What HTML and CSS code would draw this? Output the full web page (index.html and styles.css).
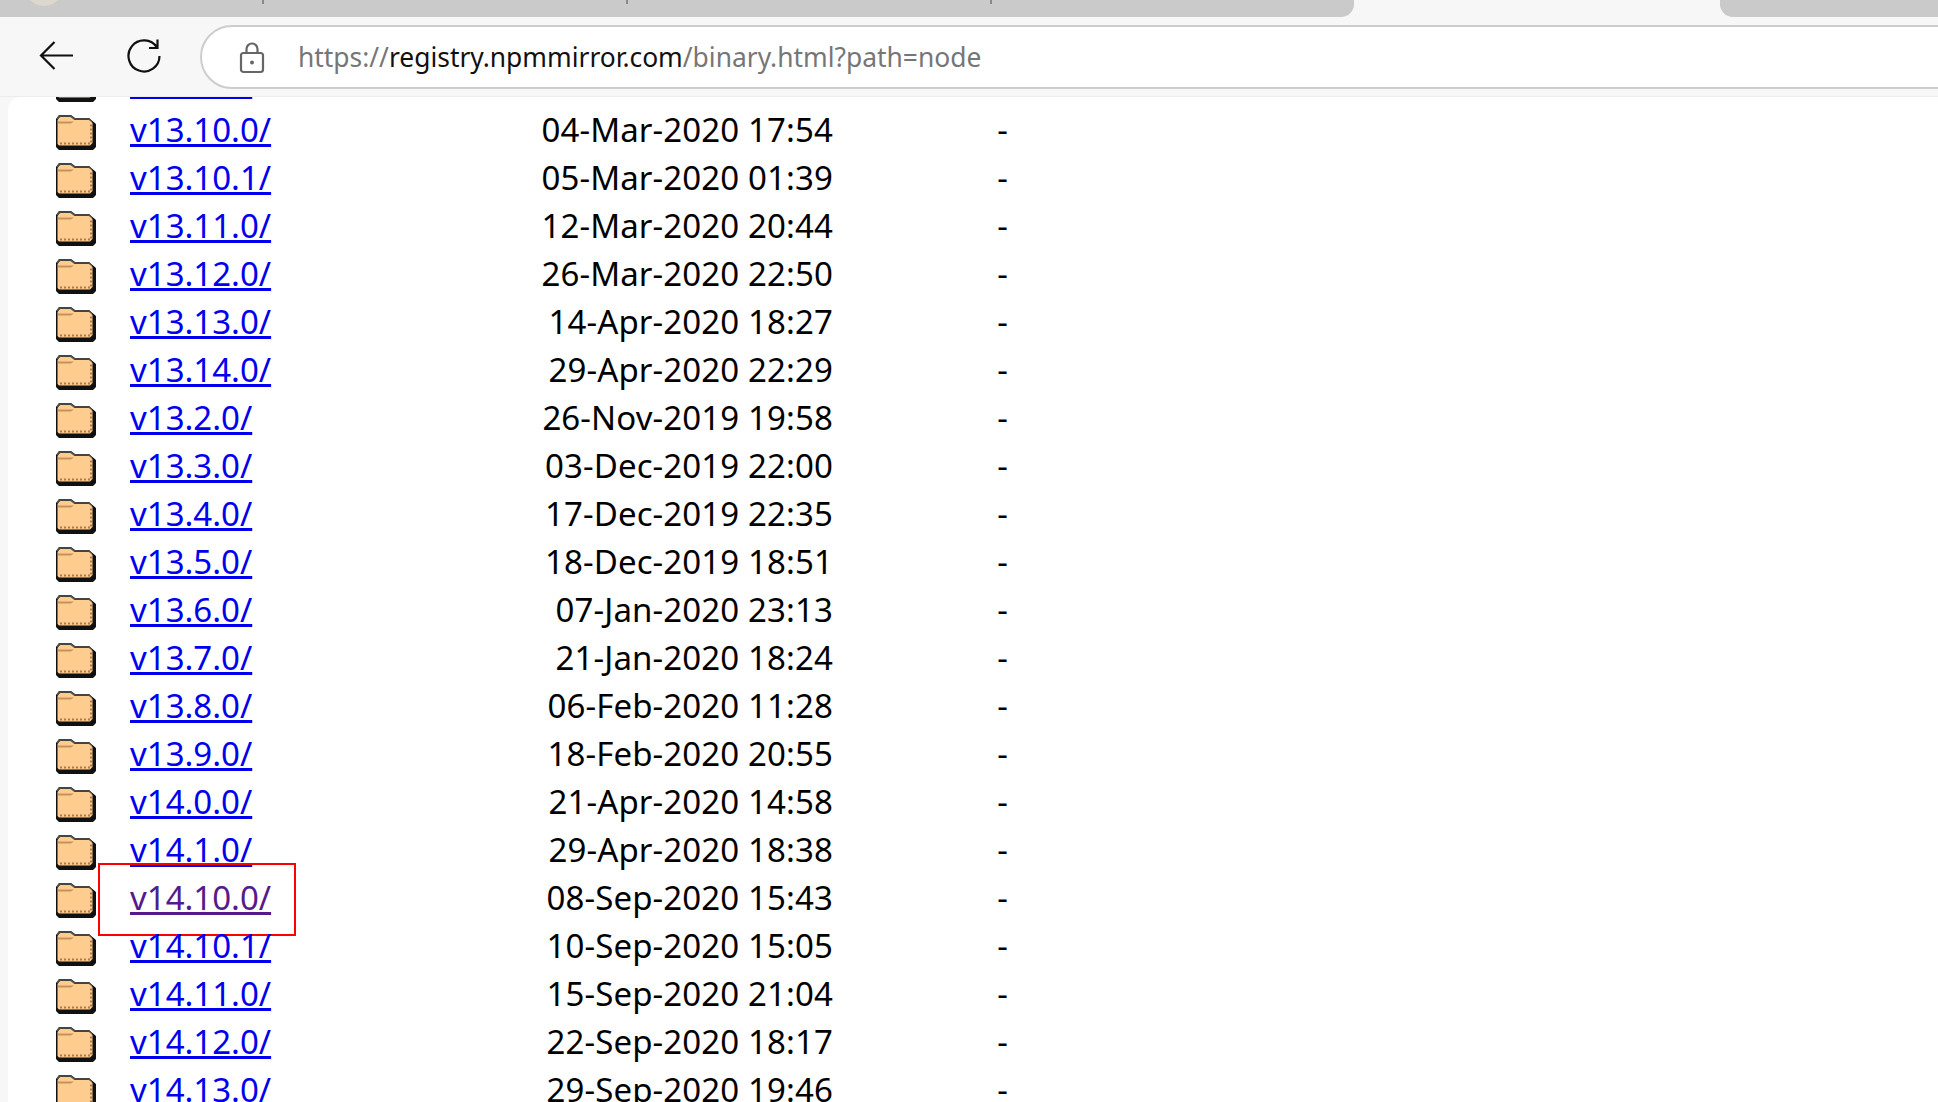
FILE: index.html
```html
<!DOCTYPE html>
<html lang="en">
<head>
  <meta charset="UTF-8">
  <title>Mirror index of node</title>
  <link rel="stylesheet" href="styles.css">
</head>
<body>
  <svg class="defs" width="0" height="0">
    <symbol id="folder" viewBox="0 0 40 36">
      <path d="M3 36 L0 33 V5 L3 1 H15 L19 4 H33 L40 10 V33 L37 36 Z" fill="#111"/>
      <path d="M1 5 L3.5 2 H14.5 L18.5 5 H33 L36 8" fill="none" stroke="#555" stroke-width="1.5"/>
      <path d="M1.5 30 V6 L4 3 H14.5 L18.5 6 H33 L36.5 9 V29 L34 31.5 H3 Z" fill="#ffcc8f"/>
      <path d="M2 9.5 H15 L18 7.5 H2 Z" fill="#c4935f"/>
      <path d="M4 29.5 H35 V10" fill="none" stroke="#a97c4c" stroke-width="2" stroke-dasharray="2 2"/>
    </symbol>
  </svg>

  <div class="tabstrip">
    <div class="tabs">
      <span class="favicon"></span>
      <span class="tabsep sep1"></span>
      <span class="tabsep sep2"></span>
      <span class="tabsep sep3"></span>
    </div>
    <div class="tabgap"></div>
    <div class="tabs-right"></div>
  </div>

  <div class="toolbar">
    <button class="navbtn back">
      <svg width="36" height="32" viewBox="0 0 36 32"><path d="M2 15.5 H34 M15.5 2 L2 15.5 L15.5 29" fill="none" stroke="#111" stroke-width="2.2"/></svg>
    </button>
    <button class="navbtn reload">
      <svg width="36" height="36" viewBox="0 0 36 36"><path d="M31 9.5 A15.5 15.5 0 1 0 33.5 18 M31.5 1.5 V10 H23" fill="none" stroke="#111" stroke-width="2.2"/></svg>
    </button>
    <div class="urlbar">
      <svg class="lock" width="26" height="32" viewBox="0 0 26 32"><rect x="2" y="11" width="22" height="19" rx="2.5" fill="none" stroke="#666" stroke-width="2.2"/><path d="M7.5 11 V7 A5.5 5.5 0 0 1 18.5 7 V11" fill="none" stroke="#666" stroke-width="2.2"/><circle cx="13" cy="20.5" r="2" fill="#666"/></svg>
      <div class="url">https://<b>registry.npmmirror.com</b>/binary.html?path=node</div>
    </div>
  </div>

  <div class="viewport">
    <div class="page">
      <div class="listing">
        <div class="row"><svg class="ficon"><use href="#folder"/></svg><a href="#">v13.1.0/</a><span class="date">19-Nov-2019 16:09</span><span class="size">-</span></div>
        <div class="row"><svg class="ficon"><use href="#folder"/></svg><a href="#">v13.10.0/</a><span class="date">04-Mar-2020 17:54</span><span class="size">-</span></div>
        <div class="row"><svg class="ficon"><use href="#folder"/></svg><a href="#">v13.10.1/</a><span class="date">05-Mar-2020 01:39</span><span class="size">-</span></div>
        <div class="row"><svg class="ficon"><use href="#folder"/></svg><a href="#">v13.11.0/</a><span class="date">12-Mar-2020 20:44</span><span class="size">-</span></div>
        <div class="row"><svg class="ficon"><use href="#folder"/></svg><a href="#">v13.12.0/</a><span class="date">26-Mar-2020 22:50</span><span class="size">-</span></div>
        <div class="row"><svg class="ficon"><use href="#folder"/></svg><a href="#">v13.13.0/</a><span class="date">14-Apr-2020 18:27</span><span class="size">-</span></div>
        <div class="row"><svg class="ficon"><use href="#folder"/></svg><a href="#">v13.14.0/</a><span class="date">29-Apr-2020 22:29</span><span class="size">-</span></div>
        <div class="row"><svg class="ficon"><use href="#folder"/></svg><a href="#">v13.2.0/</a><span class="date">26-Nov-2019 19:58</span><span class="size">-</span></div>
        <div class="row"><svg class="ficon"><use href="#folder"/></svg><a href="#">v13.3.0/</a><span class="date">03-Dec-2019 22:00</span><span class="size">-</span></div>
        <div class="row"><svg class="ficon"><use href="#folder"/></svg><a href="#">v13.4.0/</a><span class="date">17-Dec-2019 22:35</span><span class="size">-</span></div>
        <div class="row"><svg class="ficon"><use href="#folder"/></svg><a href="#">v13.5.0/</a><span class="date">18-Dec-2019 18:51</span><span class="size">-</span></div>
        <div class="row"><svg class="ficon"><use href="#folder"/></svg><a href="#">v13.6.0/</a><span class="date">07-Jan-2020 23:13</span><span class="size">-</span></div>
        <div class="row"><svg class="ficon"><use href="#folder"/></svg><a href="#">v13.7.0/</a><span class="date">21-Jan-2020 18:24</span><span class="size">-</span></div>
        <div class="row"><svg class="ficon"><use href="#folder"/></svg><a href="#">v13.8.0/</a><span class="date">06-Feb-2020 11:28</span><span class="size">-</span></div>
        <div class="row"><svg class="ficon"><use href="#folder"/></svg><a href="#">v13.9.0/</a><span class="date">18-Feb-2020 20:55</span><span class="size">-</span></div>
        <div class="row"><svg class="ficon"><use href="#folder"/></svg><a href="#">v14.0.0/</a><span class="date">21-Apr-2020 14:58</span><span class="size">-</span></div>
        <div class="row"><svg class="ficon"><use href="#folder"/></svg><a href="#">v14.1.0/</a><span class="date">29-Apr-2020 18:38</span><span class="size">-</span></div>
        <div class="row"><svg class="ficon"><use href="#folder"/></svg><a href="#" class="visited">v14.10.0/</a><span class="date">08-Sep-2020 15:43</span><span class="size">-</span><span class="redbox"></span></div>
        <div class="row"><svg class="ficon"><use href="#folder"/></svg><a href="#">v14.10.1/</a><span class="date">10-Sep-2020 15:05</span><span class="size">-</span></div>
        <div class="row"><svg class="ficon"><use href="#folder"/></svg><a href="#">v14.11.0/</a><span class="date">15-Sep-2020 21:04</span><span class="size">-</span></div>
        <div class="row"><svg class="ficon"><use href="#folder"/></svg><a href="#">v14.12.0/</a><span class="date">22-Sep-2020 18:17</span><span class="size">-</span></div>
        <div class="row"><svg class="ficon"><use href="#folder"/></svg><a href="#">v14.13.0/</a><span class="date">29-Sep-2020 19:46</span><span class="size">-</span></div>
      </div>
    </div>
  </div>
</body>
</html>
```

FILE: styles.css
```css
* {padding: 0; margin: 0; box-sizing: border-box}
html, body {
  height: 100%;
  overflow: hidden;
}
body {
  background: #f7f7f7;
  font-family: "Noto Sans", "Open Sans", sans-serif;
  display: flex;
  flex-direction: column;
}
.defs {
  position: absolute;
}

/* tab strip, cut off by the top of the picture */
.tabstrip {
  display: flex;
  height: 17px;
  flex: none;
}
.tabs {
  width: 1354px;
  position: relative;
  overflow: hidden;
  background: #cacaca;
  border-bottom-right-radius: 13px;
}
.tabgap {
  width: 366px;
}
.tabs-right {
  flex: 1;
  background: #cacaca;
  border-bottom-left-radius: 13px;
}
.favicon {
  position: absolute;
  left: 25px;
  top: -32px;
  width: 38px;
  height: 38px;
  border-radius: 50%;
  background: radial-gradient(circle at 50% 90%, #ddd8cc 0 55%, #7f766a 100%);
}
.tabsep {
  position: absolute;
  top: 0;
  width: 2px;
  height: 4px;
  background: #8a8a8a;
}
.sep1 {left: 262px;}
.sep2 {left: 626px;}
.sep3 {left: 990px;}

/* toolbar */
.toolbar {
  height: 79px;
  flex: none;
  display: flex;
  align-items: flex-start;
  padding-top: 8px;
}
.navbtn {
  border: 0;
  background: none;
  height: 62px;
  display: flex;
  align-items: center;
  justify-content: center;
}
.back {
  width: 36px;
  margin-left: 39px;
}
.reload {
  width: 36px;
  margin-left: 51px;
}
.urlbar {
  flex: 1;
  height: 64px;
  margin-left: 38px;
  margin-right: -40px;
  background: #fff;
  border: solid 2px #cdcdcd;
  border-radius: 32px;
  display: flex;
  align-items: center;
  padding-left: 37px;
  color: #767676;
}
.lock {
  margin-top: 2px;
}
.url {
  margin-left: 33px;
  font-size: 26.4px;
  white-space: nowrap;
}
.url b {
  font-weight: normal;
  color: #111;
}

/* page */
.viewport {
  flex: 1;
  min-height: 0;
  padding-left: 8px;
  border-top: solid 1px #ececec;
  overflow: hidden;
}
.page {
  height: 100%;
  background: #fff;
  border-top-left-radius: 13px;
  overflow: hidden;
}
.listing {
  margin-top: -40px;
  padding-left: 48px;
}
.row {
  position: relative;
  display: grid;
  grid-template-columns: 74px 325px 378px 175px;
  align-items: center;
  height: 48px;
  font-size: 33px;
  color: #000;
}
.ficon {
  width: 40px;
  height: 36px;
  margin-top: 6px;
}
.row a {
  color: #0000ee;
  text-decoration: underline;
  justify-self: start;
}
.row a.visited {
  color: #551a8b;
}
.date {
  text-align: right;
  white-space: nowrap;
  letter-spacing: 0.12px;
}
.size {
  text-align: right;
}
.redbox {
  position: absolute;
  left: 42px;
  top: -10px;
  width: 198px;
  height: 73px;
  border: solid 2px #f00;
}
```
